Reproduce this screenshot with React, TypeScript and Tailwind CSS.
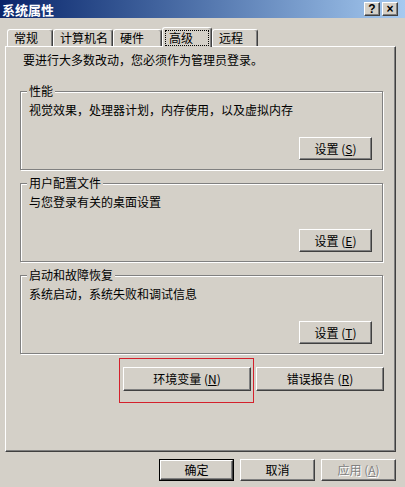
const FONT = "font-['SimSun','Noto_Sans_CJK_SC','Liberation_Sans',sans-serif]";

const TABS = [
  { label: "常规", w: "w-[46px]" },
  { label: "计算机名", w: "w-[60px]" },
  { label: "硬件", w: "w-[49px]" },
  { label: "高级", w: "w-[50px]", active: true },
  { label: "远程", w: "w-[46px]" },
];

function Btn({ children, className = "", isDefault = false, disabled = false }: {
  children: React.ReactNode; className?: string; isDefault?: boolean; disabled?: boolean;
}) {
  const face = (
    <div className="flex-1 flex items-center justify-center border border-t-white border-l-white border-r-[#404040] border-b-[#404040] shadow-[inset_-1px_-1px_0_#808080] leading-none">
      <span className={disabled ? "text-[#808080] [text-shadow:1px_1px_0_#fff]" : ""}>{children}</span>
    </div>
  );
  if (isDefault) {
    return <div className={`flex border border-black ${className}`}>{face}</div>;
  }
  return <div className={`flex ${className}`}>{face}</div>;
}

function Group({ title, desc, hotkey }: { title: string; desc: string; hotkey: string }) {
  return (
    <div className="relative ml-[14px] w-[363px] h-[79px] border border-[#808080] shadow-[1px_1px_0_#fff,inset_1px_1px_0_#fff] flex flex-col pl-[8px] pr-[10px] pt-[11px]">
      <span className="absolute left-[6px] top-[-8px] px-[2px] bg-[#d4d0c8] leading-[14px]">{title}</span>
      <p className="leading-[14px]">{desc}</p>
      <Btn className="self-end mt-[20px] w-[73px] h-[23px]">
        设置 (<u>{hotkey}</u>)
      </Btn>
    </div>
  );
}

export default function App() {
  return (
    <div className={`w-[405px] h-[487px] bg-[#d4d0c8] flex flex-col text-[12px] text-black ${FONT}`}>
      {/* 标题栏 */}
      <div className="h-[18px] flex items-center justify-between bg-gradient-to-r from-[#0a246a] to-[#a6caf0] pl-[2px] pr-[7px]">
        <span className="text-white font-bold text-[13px] leading-none">系统属性</span>
        <div className="flex gap-[2px]">
          {["?", "×"].map((g) => (
            <div key={g} className="w-[16px] h-[14px] flex items-center justify-center bg-[#d4d0c8] border border-t-white border-l-white border-r-[#404040] border-b-[#404040] shadow-[inset_-1px_-1px_0_#808080] font-bold text-[12px] leading-none font-['Liberation_Sans',sans-serif]">
              {g}
            </div>
          ))}
        </div>
      </div>

      {/* 选项卡 */}
      <div className="h-[28px] flex items-end pl-[7px]">
        {TABS.map((t) =>
          t.active ? (
            <div key={t.label} className={`${t.w} h-[20px] mb-[-1px] relative z-10 bg-[#d4d0c8] border-l border-t border-white border-r border-r-[#404040] rounded-t-[3px] shadow-[inset_-1px_0_0_#808080] flex items-center px-[2px]`}>
              <span className="flex-1 h-[16px] border border-dotted border-black flex items-center pl-[3px]">{t.label}</span>
            </div>
          ) : (
            <div key={t.label} className={`${t.w} h-[17px] border-l border-t border-white border-r border-r-[#404040] rounded-t-[3px] shadow-[inset_-1px_0_0_#808080] flex items-center pl-[6px]`}>
              {t.label}
            </div>
          )
        )}
      </div>

      {/* 面板 */}
      <div className="ml-[5px] w-[391px] h-[406px] border border-t-white border-l-white border-r-[#404040] border-b-[#404040] shadow-[inset_-1px_-1px_0_#808080] flex flex-col">
        <p className="pl-[17px] pt-[6px] leading-[14px]">要进行大多数改动，您必须作为管理员登录。</p>
        <div className="mt-[24px] flex flex-col gap-[13px]">
          <Group title="性能" desc="视觉效果，处理器计划，内存使用，以及虚拟内存" hotkey="S" />
          <Group title="用户配置文件" desc="与您登录有关的桌面设置" hotkey="E" />
          <Group title="启动和故障恢复" desc="系统启动，系统失败和调试信息" hotkey="T" />
        </div>
        <div className="mt-[13px] flex justify-end gap-[5px] mr-[11px]">
          <div className="relative">
            <Btn className="w-[128px] h-[24px]">
              环境变量 (<u>N</u>)
            </Btn>
            <div className="absolute left-[-4px] top-[-9px] w-[135px] h-[45px] border border-[#d4212c] pointer-events-none" />
          </div>
          <Btn className="w-[128px] h-[24px]">
            错误报告 (<u>R</u>)
          </Btn>
        </div>
      </div>

      {/* 底部按钮 */}
      <div className="mt-[7px] flex justify-end gap-[6px] mr-[9px]">
        <Btn isDefault className="w-[75px] h-[22px]">确定</Btn>
        <Btn className="w-[75px] h-[22px]">取消</Btn>
        <Btn disabled className="w-[75px] h-[22px]">
          应用 (<u>A</u>)
        </Btn>
      </div>
    </div>
  );
}
